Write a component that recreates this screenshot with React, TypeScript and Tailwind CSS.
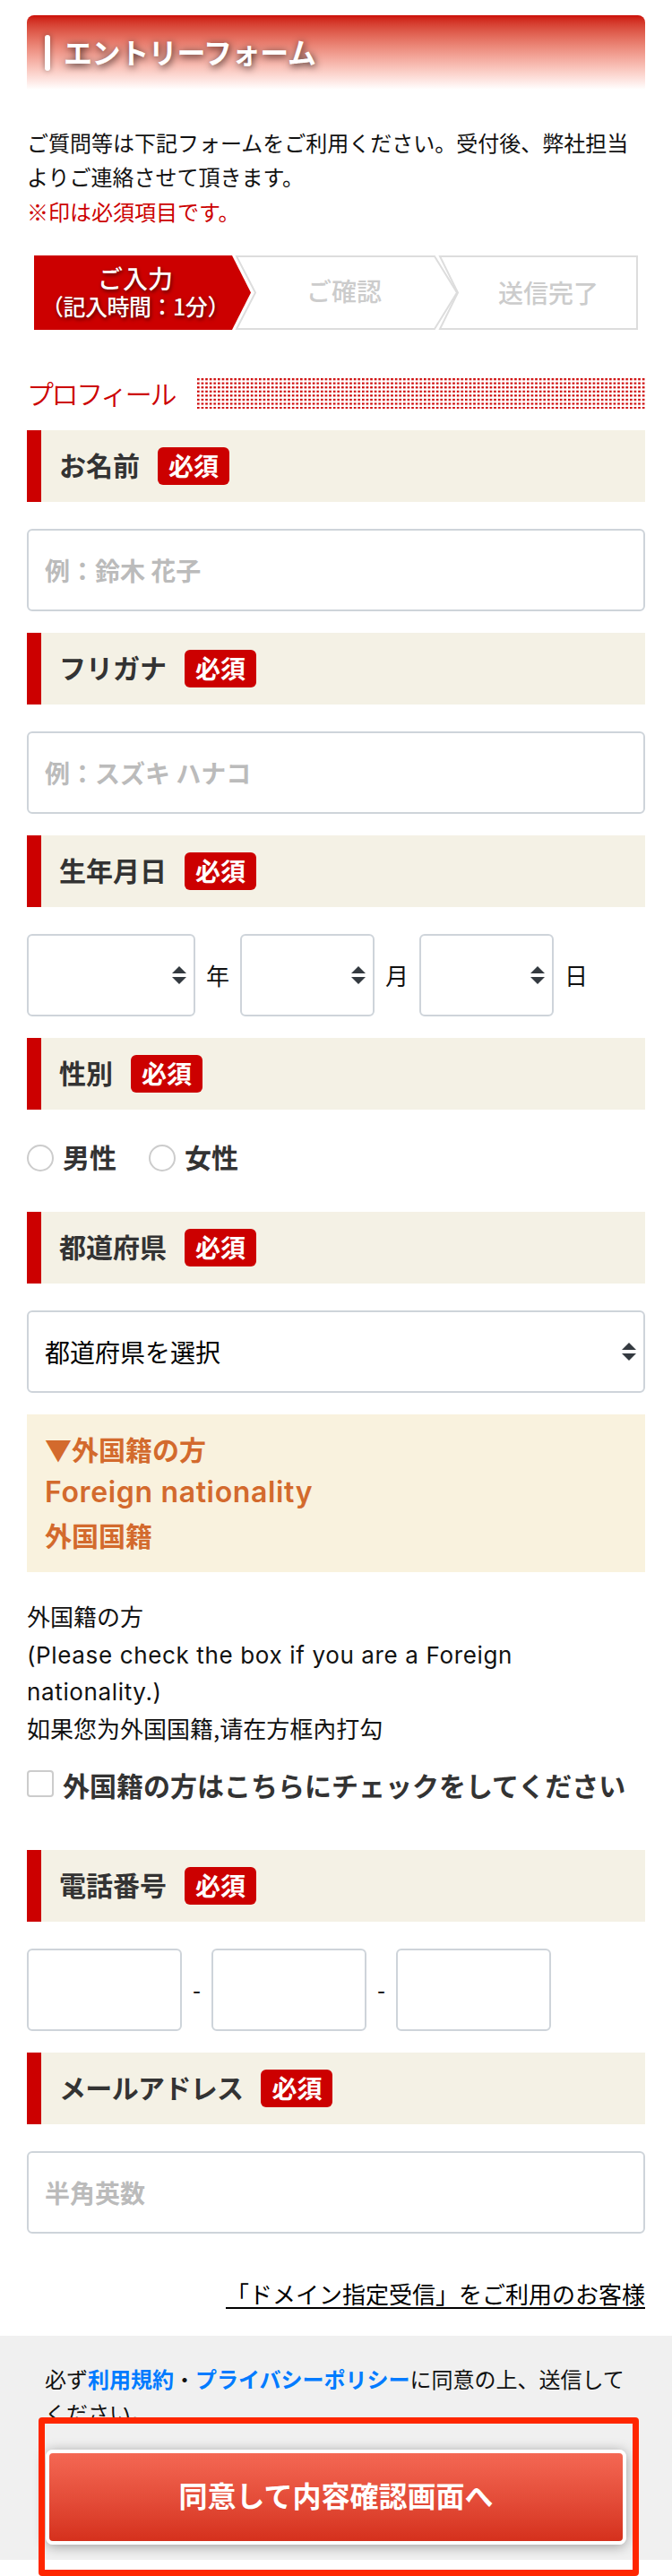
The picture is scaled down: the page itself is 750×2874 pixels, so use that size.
import { ReactNode } from 'react';

interface FieldHeadingProps {
  label: string;
  className?: string;
}

interface TextFieldProps {
  placeholder?: string;
  className?: string;
}

interface SelectBoxProps {
  className: string;
  children?: ReactNode;
}

const birthParts = [
  { unit: '年', width: 'w-[188px]' },
  { unit: '月', width: 'w-[150px]' },
  { unit: '日', width: 'w-[150px]' },
];

function FieldHeading({ label, className = '' }: FieldHeadingProps) {
  return (
    <h3 className="flex h-20 items-center gap-5 border-l-[16px] border-[#cc0000] bg-[#f4f1e5] pl-5 text-[30px] leading-none font-bold text-[#333]">
      <span className={`pb-1 ${className}`}>{label}</span>
      <span className="flex h-[42px] w-20 items-center justify-center rounded-md bg-[#cc0000] pb-0.5 text-[28px] leading-none text-white">
        必須
      </span>
    </h3>
  );
}

function TextField({ placeholder, className = 'w-full' }: TextFieldProps) {
  return (
    <input
      type="text"
      placeholder={placeholder}
      className={`block h-[92px] rounded-md border-2 border-[#ced4da] bg-white px-[18px] text-[28px] font-bold text-[#333] placeholder:text-[#bbb] ${className}`}
    />
  );
}

function SelectBox({ className, children }: SelectBoxProps) {
  return (
    <div className={`flex h-[92px] items-center justify-between rounded-md border-2 border-[#ced4da] bg-white pr-2 pl-[18px] text-[28px] text-black ${className}`}>
      <span>{children}</span>
      <svg width="16" height="20" viewBox="0 0 4 5" className="shrink-0">
        <path fill="#343a40" d="M2 0L0 2h4zm0 5L0 3h4z" />
      </svg>
    </div>
  );
}

function Steps() {
  return (
    <div className="relative mx-2 h-[83px]">
      <svg width="674" height="83" viewBox="0 0 674 83" className="block">
        <path d="M0 0H221L242 41.5L221 83H0z" fill="#cc0000" />
        <path d="M226 1H447L472 41.5L447 82H226L247 41.5z" fill="#fff" stroke="#ddd" strokeWidth="2" />
        <path d="M453 1H673V82H453L473 41.5z" fill="#fff" stroke="#ddd" strokeWidth="2" />
      </svg>
      <div className="absolute inset-0 grid grid-cols-[226px_226px_222px] items-center text-center text-[28px] leading-none font-medium text-[#ccc]">
        <div className="pb-0.5 text-white [text-shadow:1px_2px_4px_rgba(0,0,0,0.6)]">
          <p className="text-[28px] leading-[31px]">ご入力</p>
          <p className="text-[25px] leading-[31px] tracking-[-0.5px] whitespace-nowrap">
            <span className="-ml-3">（</span>記入時間：1分<span className="-mr-3">）</span>
          </p>
        </div>
        <p className="pb-1.5 pl-3.5">ご確認</p>
        <p className="pb-0.5 pl-[22px]">送信完了</p>
      </div>
    </div>
  );
}

export default function App() {
  return (
    <div className="relative h-[2874px] w-[750px] overflow-hidden bg-white pt-[17px] font-['Noto_Sans_CJK_JP',sans-serif] text-[#111]">
      <main className="px-[30px]">
        <h1 className="flex h-[83px] items-center gap-4 rounded-t-lg bg-linear-to-b from-[#cc0a05] to-white pl-5">
          <span className="h-10 w-1.5 rounded-full bg-white shadow-[0_0_6px_rgba(0,0,0,0.4)]" />
          <span className="-ml-px pb-1 text-[32px] leading-none font-bold tracking-[-0.4px] text-white [text-shadow:1px_2px_8px_rgba(0,0,0,0.8)]">エントリーフォーム</span>
        </h1>

        <div className="mt-10 h-[145px] text-2xl leading-[38.4px]">
          <p>ご質問等は下記フォームをご利用ください。受付後、弊社担当よりご連絡させて頂きます。</p>
          <p className="text-[#cc0000]">※印は必須項目です。</p>
        </div>

        <Steps />

        <div className="mt-[54px] mb-6 flex h-[34px] items-center justify-between">
          <h2 className="pb-0.5 text-[30px] leading-none font-[350] tracking-[-2.4px] text-[#cc0000]">プロフィール</h2>
          <svg width="500" height="34">
            <defs>
              <pattern id="dots" width="4.6" height="4.57" patternUnits="userSpaceOnUse">
                <rect width="2.6" height="2.2" fill="#cc0000" />
              </pattern>
            </defs>
            <rect width="500" height="34" fill="url(#dots)" />
          </svg>
        </div>

        <FieldHeading label="お名前" />
        <div className="pt-[30px] pb-6">
          <TextField placeholder="例：鈴木 花子" />
        </div>

        <FieldHeading label="フリガナ" />
        <div className="pt-[30px] pb-6">
          <TextField placeholder="例：スズキ ハナコ" />
        </div>

        <FieldHeading label="生年月日" />
        <div className="flex items-center gap-3 pt-[30px] pb-6 text-[26px]">
          {birthParts.map((part) => (
            <div key={part.unit} className="flex items-center gap-3">
              <SelectBox className={part.width} />
              <span className="pb-0.5">{part.unit}</span>
            </div>
          ))}
        </div>

        <FieldHeading label="性別" />
        <div className="flex h-[114px] items-start gap-9 pt-[39px] text-[30px] leading-none font-bold text-[#333]">
          {['男性', '女性'].map((gender) => (
            <label key={gender} className="flex h-[30px] items-center gap-2.5">
              <span className="size-[30px] rounded-full border-2 border-[#ccc] bg-white" />
              <span className="pb-1">{gender}</span>
            </label>
          ))}
        </div>

        <FieldHeading label="都道府県" />
        <div className="pt-[30px] pb-6">
          <SelectBox className="w-full">都道府県を選択</SelectBox>
        </div>

        <div className="h-44 bg-[#f9f2de] px-5 pt-3.5 text-[30px] leading-[48px] font-bold text-[#d36a2d]">
          <p>▼外国籍の方</p>
          <p className="pt-0.5 font-['Inter',sans-serif] text-[32px] leading-[46px] font-semibold tracking-[0.65px]">Foreign nationality</p>
          <p>外国国籍</p>
        </div>

        <div className="mt-7 h-[191px] text-[26px] leading-[41.6px]">
          <p>外国籍の方</p>
          <p className="relative top-0.5 font-['Inter',sans-serif] tracking-[0.64px]">
            (Please check the box if you are a Foreign
            <br />
            nationality.)
          </p>
          <p>如果您为外国国籍,请在方框內打勾</p>
        </div>

        <label className="mt-0.5 flex h-[89px] items-start gap-2.5 text-[30px] leading-[33px] font-bold text-[#333]">
          <span className="size-[30px] rounded-sm border-2 border-[#ccc] bg-white" />
          外国籍の方はこちらにチェックをしてください
        </label>

        <FieldHeading label="電話番号" />
        <div className="flex items-center pt-[30px] pb-6 text-[26px]">
          <TextField className="w-[173px]" />
          <span className="w-[33px] pb-1 text-center">-</span>
          <TextField className="w-[173px]" />
          <span className="w-[33px] pb-1 text-center">-</span>
          <TextField className="w-[173px]" />
        </div>

        <FieldHeading label="メールアドレス" className="tracking-[-0.65px]" />
        <div className="pt-[30px]">
          <TextField placeholder="半角英数" />
        </div>

        <p className="mt-[46px] h-[68px] text-right text-[26px] leading-[41.6px] text-black">
          <a className="underline decoration-2 underline-offset-4">「ドメイン指定受信」をご利用のお客様</a>
        </p>
      </main>

      <section className="h-[250px] bg-[#f0f0f0] px-[50px] pt-[29px]">
        <div className="h-[98px] text-2xl leading-[38.4px]">
          <p className="flex whitespace-nowrap">
            <span>必ず</span>
            <a className="font-bold text-[#007bff]">利用規約</a>
            <span>・</span>
            <a className="font-bold text-[#007bff]">プライバシーポリシー</a>
            <span>に同意の上、送信して</span>
          </p>
          <p>ください。</p>
        </div>
        <button className="ml-px flex h-[106px] w-[648px] items-center justify-center rounded-lg border-4 border-white bg-linear-to-b from-[#f46753] to-[#d5301c] pb-1.5 text-[32px] leading-none font-bold text-white shadow-[0_2px_14px_rgba(0,0,0,0.35)]">
          同意して内容確認画面へ
        </button>
      </section>

      {/* Highlight around the submit button */}
      <div className="pointer-events-none absolute top-[2697px] left-[43px] h-[177px] w-[670px] rounded border-[7px] border-[#ff2600]" />
    </div>
  );
}
